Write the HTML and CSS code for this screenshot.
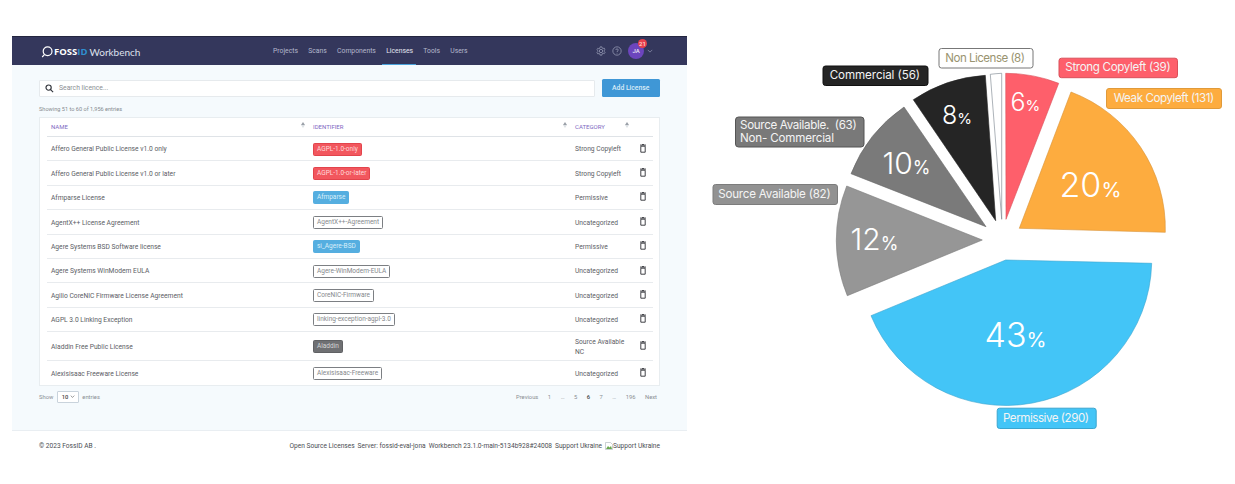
FILE: index.html
```html
<!DOCTYPE html>
<html lang="en">
<head>
<meta charset="UTF-8">
<meta name="viewport" content="width=device-width, initial-scale=1.0">
<title>FossID Workbench Licenses</title>
<link rel="stylesheet" href="styles.css">
</head>
<body>
<div class="page">

  <div class="app">
    <header class="topbar">
      <div class="logo">
        <svg class="logo_mark" viewBox="0 0 12 12"><circle cx="6.6" cy="5.3" r="4.4"/><path d="M3.4 8.6 1.2 11"/></svg>
        <span class="logo_foss">FOSS</span><span class="logo_id">ID</span><span class="logo_wb">Workbench</span>
      </div>
      <nav class="nav">
        <a>Projects</a>
        <a>Scans</a>
        <a>Components</a>
        <a class="active">Licenses</a>
        <a>Tools</a>
        <a>Users</a>
      </nav>
      <div class="user">
        <svg class="top_icon" viewBox="0 0 12 12"><path d="M5 1h2l.3 1.4 1.2.6 1.3-.5 1 1.7-1 1 .1 1.3 1 1-1 1.7-1.3-.5-1.2.6L7 11H5l-.3-1.4-1.2-.6-1.3.5-1-1.7 1-1-.1-1.3-1-1 1-1.7 1.3.5 1.2-.6z"/><circle cx="6" cy="6" r="2"/></svg>
        <svg class="top_icon" viewBox="0 0 12 12"><circle cx="6" cy="6" r="5"/><path d="M4.500 4.800C4.500 3 7.500 3 7.500 4.800 7.500 6 6 5.900 6 7.200M6 8.200v.8"/></svg>
        <div class="avatar">JA<span class="badge_count">21</span></div>
        <svg class="chevron" viewBox="0 0 8 5"><path d="M1 1l3 3 3-3"/></svg>
      </div>
    </header>

    <main class="content">
      <div class="search_row">
        <div class="search">
          <svg class="search_icon" viewBox="0 0 10 10"><circle cx="4" cy="4" r="2.900"/><path d="M6.200 6.200 9 9"/></svg>
          <span>Search licence...</span>
        </div>
        <button class="add_btn">Add License</button>
      </div>
      <p class="info">Showing 51 to 60 of 1,956 entries</p>

      <div class="card">
        <div class="row head">
          <span class="sort">Name</span>
          <span class="sort">Identifier</span>
          <span class="sort">Category</span>
          <span></span>
        </div>
        <div class="row">
          <span>Affero General Public License v1.0 only</span>
          <span><b class="tag red">AGPL-1.0-only</b></span>
          <span>Strong Copyleft</span>
          <svg class="trash" viewBox="0 0 6 9"><path d="M.8 2.200h4.400v6H.8zM0 1.100h6M2 .4h2"/></svg>
        </div>
        <div class="row">
          <span>Affero General Public License v1.0 or later</span>
          <span><b class="tag red">AGPL-1.0-or-later</b></span>
          <span>Strong Copyleft</span>
          <svg class="trash" viewBox="0 0 6 9"><path d="M.8 2.200h4.400v6H.8zM0 1.100h6M2 .4h2"/></svg>
        </div>
        <div class="row">
          <span>Afmparse License</span>
          <span><b class="tag blue">Afmparse</b></span>
          <span>Permissive</span>
          <svg class="trash" viewBox="0 0 6 9"><path d="M.8 2.200h4.400v6H.8zM0 1.100h6M2 .4h2"/></svg>
        </div>
        <div class="row">
          <span>AgentX++ License Agreement</span>
          <span><b class="tag plain">AgentX++-Agreement</b></span>
          <span>Uncategorized</span>
          <svg class="trash" viewBox="0 0 6 9"><path d="M.8 2.200h4.400v6H.8zM0 1.100h6M2 .4h2"/></svg>
        </div>
        <div class="row">
          <span>Agere Systems BSD Software license</span>
          <span><b class="tag blue">si_Agere-BSD</b></span>
          <span>Permissive</span>
          <svg class="trash" viewBox="0 0 6 9"><path d="M.8 2.200h4.400v6H.8zM0 1.100h6M2 .4h2"/></svg>
        </div>
        <div class="row">
          <span>Agere Systems WinModem EULA</span>
          <span><b class="tag plain">Agere-WinModem-EULA</b></span>
          <span>Uncategorized</span>
          <svg class="trash" viewBox="0 0 6 9"><path d="M.8 2.200h4.400v6H.8zM0 1.100h6M2 .4h2"/></svg>
        </div>
        <div class="row">
          <span>Agilio CoreNIC Firmware License Agreement</span>
          <span><b class="tag plain">CoreNIC-Firmware</b></span>
          <span>Uncategorized</span>
          <svg class="trash" viewBox="0 0 6 9"><path d="M.8 2.200h4.400v6H.8zM0 1.100h6M2 .4h2"/></svg>
        </div>
        <div class="row">
          <span>AGPL 3.0 Linking Exception</span>
          <span><b class="tag plain">linking-exception-agpl-3.0</b></span>
          <span>Uncategorized</span>
          <svg class="trash" viewBox="0 0 6 9"><path d="M.8 2.200h4.400v6H.8zM0 1.100h6M2 .4h2"/></svg>
        </div>
        <div class="row">
          <span>Aladdin Free Public License</span>
          <span><b class="tag grey">Aladdin</b></span>
          <span>Source Available NC</span>
          <svg class="trash" viewBox="0 0 6 9"><path d="M.8 2.200h4.400v6H.8zM0 1.100h6M2 .4h2"/></svg>
        </div>
        <div class="row">
          <span>Alexisisaac Freeware License</span>
          <span><b class="tag plain">Alexisisaac-Freeware</b></span>
          <span>Uncategorized</span>
          <svg class="trash" viewBox="0 0 6 9"><path d="M.8 2.200h4.400v6H.8zM0 1.100h6M2 .4h2"/></svg>
        </div>
      </div>

      <div class="table_foot">
        <div class="length">
          Show
          <span class="select">10 <svg class="select_arrow" viewBox="0 0 8 5"><path d="M1 1l3 3 3-3"/></svg></span>
          entries
        </div>
        <div class="pager">
          <a>Previous</a><a>1</a><a>…</a><a>5</a><a class="current">6</a><a>7</a><a>…</a><a>196</a><a>Next</a>
        </div>
      </div>
    </main>

    <footer class="footer">
      <span>© 2023 FossID AB .</span>
      <div class="footer_links">
        <span>Open Source Licenses</span>
        <span>Server: fossid-eval-jona</span>
        <span>Workbench 23.1.0-main-5134b928#24008</span>
        <span>Support Ukraine</span>
        <span class="broken">
          <svg class="broken_icon" viewBox="0 0 8 8"><path class="broken_sheet" d="M.5.5h5l2 2v5h-7z"/><path class="broken_hill" d="M1 7l2-3 1.500 1.500L6 4l1 3z"/></svg>Support Ukraine
        </span>
      </div>
    </footer>
  </div>

  <div class="chart">
    <svg class="pie" viewBox="687 0 548 484">
      <path class="slice s_red" d="M1006 219.300 1005.700 73.300A146 146 0 0 1 1058.700 83.300Z"/>
      <path class="slice s_orange" d="M1019.300 228.300 1071 92A146 146 0 0 1 1165.300 232.300Z"/>
      <path class="slice s_blue" d="M1005.700 260 1151.700 263.300A146 146 0 0 1 871 315.700Z"/>
      <path class="slice s_grey" d="M982.300 240 847.300 295.700A146 146 0 0 1 846.700 186Z"/>
      <path class="slice s_dark" d="M986 226.700 851 173.700A146 146 0 0 1 904 107Z"/>
      <path class="slice s_black" d="M995.700 220.700 913.300 99.700A146 146 0 0 1 985.300 75.300Z"/>
      <path class="slice s_white" d="M1001.700 219.300 990.300 74.300A146 146 0 0 1 1001.700 73.300Z"/>

      <text class="pct small" x="1010.500" y="111">6<tspan class="unit">%</tspan></text>
      <text class="pct small" x="942" y="124">8<tspan class="unit">%</tspan></text>
      <text class="pct mid" x="882.500" y="174">10<tspan class="unit">%</tspan></text>
      <text class="pct mid" x="850.500" y="250">12<tspan class="unit">%</tspan></text>
      <text class="pct big" x="1059.500" y="196.500">20<tspan class="unit">%</tspan></text>
      <text class="pct big" x="984.500" y="346.500">43<tspan class="unit">%</tspan></text>

      <rect class="lab l_white" x="939" y="48.500" width="94" height="19.500" rx="2.500"/>
      <text class="lab_text t_tan" x="945.300" y="62" textLength="79.700">Non License (8)</text>
      <rect class="lab l_black" x="823" y="66" width="105" height="19.500" rx="2.500"/>
      <text class="lab_text" x="829.700" y="79.300" textLength="90.300">Commercial (56)</text>
      <rect class="lab l_dark" x="735.500" y="117" width="128.500" height="30" rx="3"/>
      <text class="lab_text" x="740" y="129.300" textLength="116.700">Source Available.&#160;&#160;(63)</text>
      <text class="lab_text" x="740" y="141.600" textLength="94">Non- Commercial</text>
      <rect class="lab l_grey" x="713" y="184.500" width="124.500" height="20" rx="2.500"/>
      <text class="lab_text" x="718.300" y="198" textLength="112.400">Source Available (82)</text>
      <rect class="lab l_red" x="1059" y="58.200" width="118.500" height="19.500" rx="2.500"/>
      <text class="lab_text" x="1065.300" y="71.300" textLength="105.400">Strong Copyleft (39)</text>
      <rect class="lab l_orange" x="1106.500" y="88.500" width="115" height="20" rx="2.500"/>
      <text class="lab_text" x="1113.700" y="101.800" textLength="100.600">Weak Copyleft (131)</text>
      <rect class="lab l_blue" x="997.200" y="408.200" width="99" height="20.300" rx="2.500"/>
      <text class="lab_text" x="1003" y="421.800" textLength="86">Permissive (290)</text>
    </svg>
  </div>

</div>
</body>
</html>
```

FILE: styles.css
```css
body {
  margin: 0;
  background: #fff;
  font-family: Roboto, "Liberation Sans", sans-serif;
  color: #444;
}
.page {
  display: flex;
  height: 484px;
  overflow: hidden;
}

/* left: the app screenshot */
.app {
  width: 675px;
  margin: 36px 0 0 12px;
  flex: none;
}
.topbar {
  display: flex;
  align-items: center;
  height: 29px;
  padding: 0 34px 0 29px;
  background: #34375c;
  border-top: 1px solid #23253f;
  box-sizing: border-box;
}
.logo {
  display: flex;
  align-items: center;
  width: 232px;
  margin-top: 1px;
  color: #fff;
  flex: none;
}
.logo_mark {
  width: 12px;
  height: 12px;
  margin-right: 1px;
  fill: none;
  stroke: #fff;
  stroke-width: 1.200;
}
.logo_foss {
  font: 700 9.500px "Open Sans", sans-serif;
}
.logo_id {
  font: 700 9.500px "Open Sans", sans-serif;
  color: #2f8fd0;
  margin-right: 2px;
}
.logo_wb {
  font: 400 10px Lato, sans-serif;
  color: #dfe1ec;
}
.nav {
  display: flex;
  gap: 10.300px;
  height: 100%;
  font-size: 6.800px;
  color: #b5b8cd;
}
.nav a {
  display: flex;
  align-items: center;
  position: relative;
}
.nav .active {
  color: #e4e6f0;
}
.nav .active::after {
  content: "";
  position: absolute;
  left: -4px;
  right: -3px;
  bottom: 0;
  height: 1.500px;
  background: #4aa3dc;
}
.user {
  display: flex;
  align-items: center;
  margin-left: auto;
}
.top_icon {
  width: 10px;
  height: 10px;
  margin-right: 6px;
  fill: none;
  stroke: #9a9eb8;
  stroke-width: .9;
}
.avatar {
  position: relative;
  width: 16px;
  height: 16px;
  border-radius: 50%;
  background: #6c45bd;
  color: #e8e4f4;
  font-size: 6px;
  font-weight: 500;
  line-height: 16px;
  text-align: center;
}
.badge_count {
  position: absolute;
  top: -4px;
  right: -3px;
  width: 9px;
  height: 9px;
  border-radius: 50%;
  background: #e8404c;
  color: #ffd5d8;
  font-size: 6px;
  line-height: 9px;
}
.chevron {
  width: 6px;
  height: 4px;
  margin-left: 3px;
  fill: none;
  stroke: #9a9eb8;
  stroke-width: .9;
}

.content {
  height: 366px;
  padding: 14px 27px 0;
  background: #f5fafd;
  border-bottom: 1px solid #e9eef2;
  box-sizing: border-box;
}
.search_row {
  display: flex;
  align-items: center;
  gap: 7px;
}
.search {
  display: flex;
  align-items: center;
  flex: 1;
  height: 17px;
  padding-left: 5px;
  background: #fff;
  border: 1px solid #e6eaed;
  border-radius: 1px;
  box-sizing: border-box;
  font-size: 6.800px;
  color: #8b8f94;
}
.search_icon {
  width: 9px;
  height: 9px;
  margin-right: 5px;
  fill: none;
  stroke: #33363d;
  stroke-width: 1.300;
}
.add_btn {
  width: 58.500px;
  height: 18px;
  padding: 0;
  background: #3f97d6;
  border: 0;
  border-radius: 1.500px;
  color: #d9ecf8;
  font: 500 6.800px Roboto, sans-serif;
}
.info {
  margin: 8px 0 4px;
  font-size: 5.600px;
  line-height: 8px;
  color: #858a90;
}
.card {
  height: 268.500px;
  padding: 0 6.500px;
  background: #fff;
  border: 1px solid #e8edf0;
  box-sizing: border-box;
}
.row {
  display: grid;
  grid-template-columns: 262px 262px 62px 1fr;
  align-items: center;
  min-height: 24.400px;
  padding: 4px 0 3px 4.500px;
  border-bottom: 1px solid #e8ebee;
  box-sizing: border-box;
  font-size: 6.700px;
  line-height: 9.500px;
  color: #5c6066;
}
.row:last-child {
  border-bottom: 0;
}
.row > span:first-child,
.row > span:nth-child(3) {
  padding-top: 2px;
}
.row > span:nth-child(3) {
  max-width: 52px;
}
.head {
  min-height: 19px;
  padding: 0 0 0 4.500px;
  border-bottom: 1px solid #dfe3e7;
  font-size: 6px;
  color: #8069c2;
  text-transform: uppercase;
}
.head > span:first-child,
.head > span:nth-child(3) {
  padding-top: 0;
}
.sort {
  position: relative;
  display: block;
  max-width: none !important;
}
/* sort arrows: active up, faint down */
.sort::before,
.sort::after {
  content: "";
  position: absolute;
  right: 8px;
  border: 2px solid transparent;
}
.sort::after {
  top: -2px;
  border-bottom: 3px solid #9aa0a8;
}
.sort::before {
  top: 3px;
  border-top: 3px solid #dde1e5;
}
.head .sort:nth-child(3)::before,
.head .sort:nth-child(3)::after {
  right: auto;
  left: 50px;
}
.tag {
  display: block;
  width: fit-content;
  height: 13px;
  padding: 0 3px;
  border: 1px solid transparent;
  border-radius: 1.500px;
  box-sizing: border-box;
  font-size: 6.500px;
  font-weight: 400;
  line-height: 11px;
  white-space: nowrap;
}
.red {
  background: #f2575e;
  border-color: #e2444c;
  color: #ffd9da;
}
.blue {
  background: #55aee0;
  border-color: #55aee0;
  color: #d9eefa;
}
.plain {
  background: #fff;
  border-color: #7c7f83;
  color: #85888c;
}
.grey {
  background: #6f7073;
  border-color: #606164;
  color: #d4d5d6;
}
.trash {
  width: 6px;
  height: 9px;
  margin: -2px 0 0 2.500px;
  fill: none;
  stroke: #2c2e33;
  stroke-width: .9;
}
.table_foot {
  display: flex;
  justify-content: space-between;
  align-items: center;
  height: 22px;
  font-size: 5.800px;
  color: #8a8e93;
}
.length {
  display: flex;
  align-items: center;
  gap: 3.500px;
}
.select {
  display: flex;
  align-items: center;
  justify-content: space-between;
  width: 22px;
  height: 12px;
  padding: 0 3px 0 4px;
  background: #fff;
  border: 1px solid #c9d3dc;
  border-radius: 1px;
  box-sizing: border-box;
  color: #444;
  font-weight: 500;
}
.select_arrow {
  width: 5px;
  height: 3px;
  fill: none;
  stroke: #555;
}
.pager {
  display: flex;
  gap: 9.500px;
  padding-right: 3px;
}
.pager .current {
  color: #444;
  font-weight: 500;
}

.footer {
  display: flex;
  justify-content: space-between;
  align-items: center;
  height: 29px;
  padding: 1px 27px 0;
  box-sizing: border-box;
  font-size: 6.600px;
  color: #4a4d52;
}
.footer_links {
  display: flex;
  gap: 3px;
}
.broken {
  display: flex;
  align-items: center;
}
.broken_icon {
  width: 8px;
  height: 8px;
}
.broken_sheet {
  fill: #fff;
  stroke: #a9b2bb;
  stroke-width: .6;
}
.broken_hill {
  fill: #6aa84f;
}

/* right: pie chart, the svg uses page coordinates */
.chart {
  flex: none;
  width: 548px;
  height: 484px;
}
.pie {
  display: block;
  width: 548px;
  height: 484px;
}
.slice {
  stroke-width: .6;
}
.s_red { fill: #fe5f6b; stroke: #d9505a; }
.s_orange { fill: #fdac3f; stroke: #d99236; }
.s_blue { fill: #43c5f7; stroke: #3aa5cf; }
.s_grey { fill: #969696; stroke: #7c7c7c; }
.s_dark { fill: #7a7a7a; stroke: #666; }
.s_black { fill: #252525; stroke: #252525; }
.s_white { fill: #fff; stroke: #75808a; }

.pct {
  font-family: Inter, Lato, sans-serif;
  font-weight: 300;
  fill: #fff;
}
.small { font-size: 25px; }
.mid { font-size: 30px; }
.big { font-size: 34px; }
.unit { font-size: .6em; font-weight: 400; }

.lab {
  stroke-width: 1;
}
.lab_text {
  font-family: Inter, Lato, sans-serif;
  font-size: 11.600px;
  fill: #f4f4f4;
}
.t_tan { fill: #9a9470; }
.l_white { fill: #fff; stroke: #777; }
.l_black { fill: #252525; stroke: #111; }
.l_dark { fill: #797979; stroke: #555; }
.l_grey { fill: #929292; stroke: #7c7c7c; }
.l_red { fill: #fe5f6b; stroke: #d9505a; }
.l_orange { fill: #fdac3f; stroke: #e09a3a; }
.l_blue { fill: #43c5f7; stroke: #3aa5cf; }
```
